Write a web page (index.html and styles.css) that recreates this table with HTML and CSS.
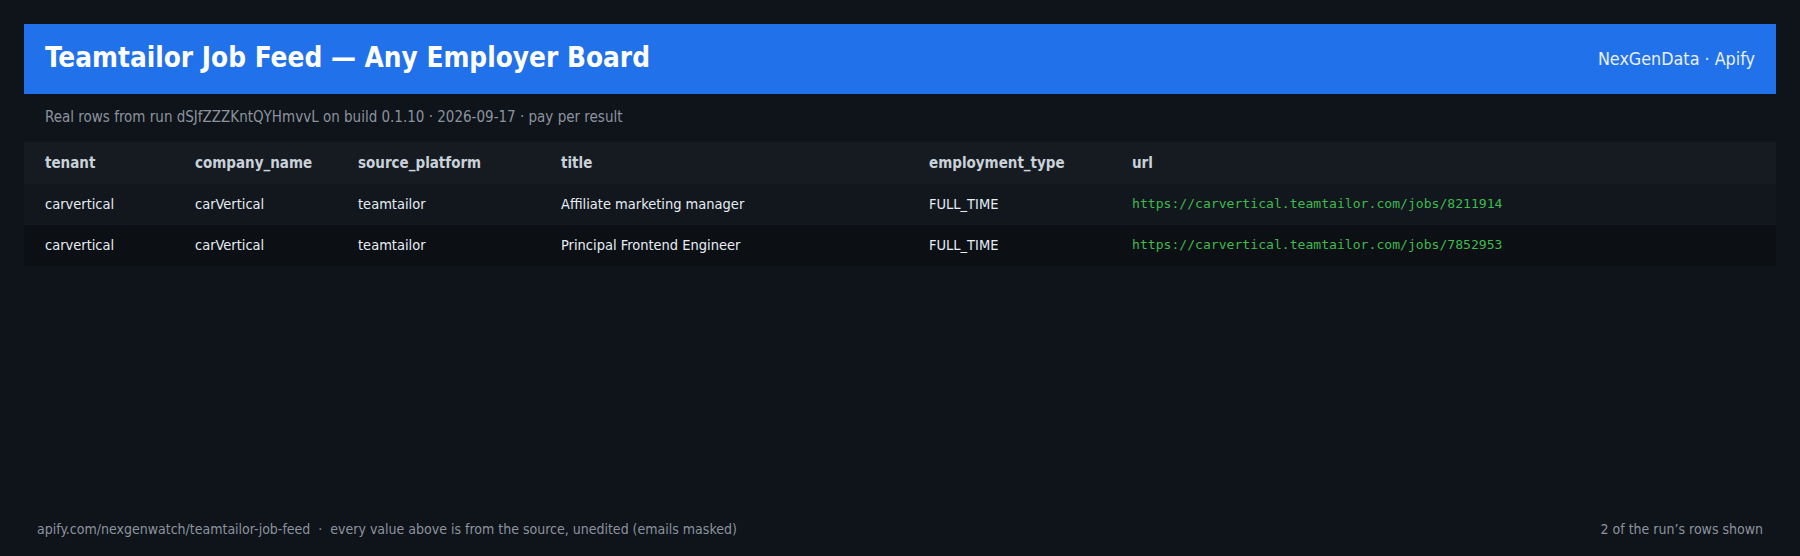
FILE: index.html
```html
<!DOCTYPE html>
<html lang="en">
<head>
<meta charset="utf-8">
<title>Teamtailor Job Feed</title>
<link rel="stylesheet" href="styles.css">
</head>
<body>
<div class="page">
  <header class="banner">
    <h1 class="banner-title">Teamtailor Job Feed — Any Employer Board</h1>
    <div class="banner-brand">NexGenData · Apify</div>
  </header>
  <p class="subtitle">Real rows from run dSJfZZZKntQYHmvvL on build 0.1.10 · 2026-09-17 · pay per result</p>
  <table class="data">
    <colgroup>
      <col class="c-tenant">
      <col class="c-company">
      <col class="c-source">
      <col class="c-title">
      <col class="c-emp">
      <col class="c-url">
    </colgroup>
    <thead>
      <tr>
        <th>tenant</th>
        <th>company_name</th>
        <th>source_platform</th>
        <th>title</th>
        <th>employment_type</th>
        <th>url</th>
      </tr>
    </thead>
    <tbody>
      <tr class="odd">
        <td>carvertical</td>
        <td>carVertical</td>
        <td>teamtailor</td>
        <td>Affiliate marketing manager</td>
        <td>FULL_TIME</td>
        <td class="url">https://carvertical.teamtailor.com/jobs/8211914</td>
      </tr>
      <tr class="even">
        <td>carvertical</td>
        <td>carVertical</td>
        <td>teamtailor</td>
        <td>Principal Frontend Engineer</td>
        <td>FULL_TIME</td>
        <td class="url">https://carvertical.teamtailor.com/jobs/7852953</td>
      </tr>
    </tbody>
  </table>
  <footer class="footer">
    <span class="footer-left">apify.com/nexgenwatch/teamtailor-job-feed &nbsp;·&nbsp; every value above is from the source, unedited (emails masked)</span>
    <span class="footer-right">2 of the run’s rows shown</span>
  </footer>
</div>
</body>
</html>
```

FILE: styles.css
```css
* { box-sizing: border-box; }

html, body {
  margin: 0;
  padding: 0;
  background: #0f131a;
}

body {
  font-family: "DejaVu Sans Condensed", "DejaVu Sans", "Liberation Sans", sans-serif;
  color: #e6edf3;
}

.page {
  height: 556px;
  padding: 24px 24px 0;
  display: flex;
  flex-direction: column;
}

.banner {
  height: 70px;
  background: #2171ea;
  display: flex;
  align-items: center;
  justify-content: space-between;
  padding: 0 21px 0 21px;
}

.banner-title {
  margin: 0;
  font-size: 27.7px;
  font-weight: bold;
  color: #ffffff;
  line-height: 32px;
  position: relative;
  top: -1px;
}

.banner-brand {
  font-size: 17.8px;
  line-height: 22px;
  color: #e8f0fd;
}

.subtitle {
  margin: 0;
  padding: 14px 21px 16px;
  font-size: 15px;
  line-height: 18px;
  color: #8b949e;
}

.data {
  width: 100%;
  border-collapse: collapse;
  table-layout: fixed;
  font-size: 14.5px;
}

.c-tenant { width: 150px; }
.c-company { width: 163px; }
.c-source { width: 203px; }
.c-title { width: 368px; }
.c-emp { width: 203px; }

.data th {
  text-align: left;
  font-weight: bold;
  font-size: 15px;
  color: #c9d1d9;
  background: #161b22;
  padding: 12px 21px;
  line-height: 18px;
}

.data td {
  padding: 11px 21px 12px;
  line-height: 18px;
  color: #e6edf3;
  white-space: nowrap;
}

.data tr.odd td { background: #12171e; }
.data tr.even td { background: #0c0f14; }

.data td.url {
  font-family: "DejaVu Sans Mono", "Liberation Mono", monospace;
  font-size: 13.1px;
  color: #3fb950;
}

.footer {
  margin-top: auto;
  display: flex;
  justify-content: space-between;
  padding: 0 13px 18px;
  font-size: 14px;
  line-height: 17px;
  color: #8b949e;
}
```
